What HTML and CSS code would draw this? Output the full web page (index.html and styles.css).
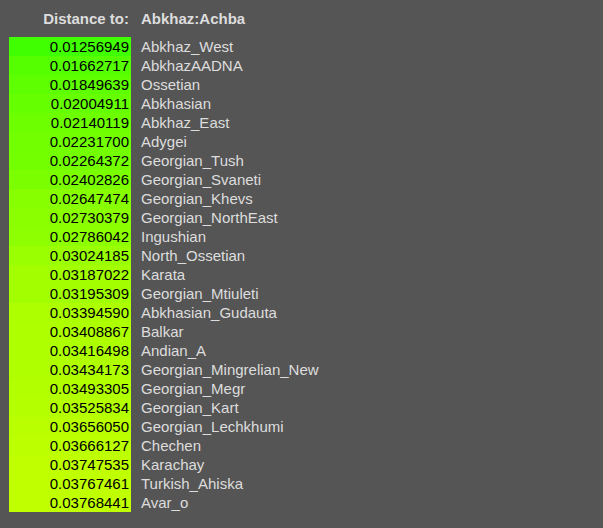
FILE: index.html
```html
<!DOCTYPE html>
<html>
<head>
<meta charset="utf-8">
<link rel="stylesheet" href="styles.css">
</head>
<body>
<div class="wrap">
  <div class="head">
    <div class="head-label">Distance to:</div>
    <div class="head-target">Abkhaz:Achba</div>
  </div>
  <table class="dist">
    <tbody>
      <tr><td class="val" style="background:rgb(64,255,0)">0.01256949</td><td class="name">Abkhaz_West</td></tr>
      <tr><td class="val" style="background:rgb(85,255,0)">0.01662717</td><td class="name">AbkhazAADNA</td></tr>
      <tr><td class="val" style="background:rgb(94,255,0)">0.01849639</td><td class="name">Ossetian</td></tr>
      <tr><td class="val" style="background:rgb(102,255,0)">0.02004911</td><td class="name">Abkhasian</td></tr>
      <tr><td class="val" style="background:rgb(109,255,0)">0.02140119</td><td class="name">Abkhaz_East</td></tr>
      <tr><td class="val" style="background:rgb(114,255,0)">0.02231700</td><td class="name">Adygei</td></tr>
      <tr><td class="val" style="background:rgb(115,255,0)">0.02264372</td><td class="name">Georgian_Tush</td></tr>
      <tr><td class="val" style="background:rgb(123,255,0)">0.02402826</td><td class="name">Georgian_Svaneti</td></tr>
      <tr><td class="val" style="background:rgb(135,255,0)">0.02647474</td><td class="name">Georgian_Khevs</td></tr>
      <tr><td class="val" style="background:rgb(139,255,0)">0.02730379</td><td class="name">Georgian_NorthEast</td></tr>
      <tr><td class="val" style="background:rgb(142,255,0)">0.02786042</td><td class="name">Ingushian</td></tr>
      <tr><td class="val" style="background:rgb(154,255,0)">0.03024185</td><td class="name">North_Ossetian</td></tr>
      <tr><td class="val" style="background:rgb(163,255,0)">0.03187022</td><td class="name">Karata</td></tr>
      <tr><td class="val" style="background:rgb(163,255,0)">0.03195309</td><td class="name">Georgian_Mtiuleti</td></tr>
      <tr><td class="val" style="background:rgb(173,255,0)">0.03394590</td><td class="name">Abkhasian_Gudauta</td></tr>
      <tr><td class="val" style="background:rgb(174,255,0)">0.03408867</td><td class="name">Balkar</td></tr>
      <tr><td class="val" style="background:rgb(174,255,0)">0.03416498</td><td class="name">Andian_A</td></tr>
      <tr><td class="val" style="background:rgb(175,255,0)">0.03434173</td><td class="name">Georgian_Mingrelian_New</td></tr>
      <tr><td class="val" style="background:rgb(178,255,0)">0.03493305</td><td class="name">Georgian_Megr</td></tr>
      <tr><td class="val" style="background:rgb(180,255,0)">0.03525834</td><td class="name">Georgian_Kart</td></tr>
      <tr><td class="val" style="background:rgb(186,255,0)">0.03656050</td><td class="name">Georgian_Lechkhumi</td></tr>
      <tr><td class="val" style="background:rgb(187,255,0)">0.03666127</td><td class="name">Chechen</td></tr>
      <tr><td class="val" style="background:rgb(191,255,0)">0.03747535</td><td class="name">Karachay</td></tr>
      <tr><td class="val" style="background:rgb(192,255,0)">0.03767461</td><td class="name">Turkish_Ahiska</td></tr>
      <tr><td class="val" style="background:rgb(192,255,0)">0.03768441</td><td class="name">Avar_o</td></tr>
    </tbody>
  </table>
</div>
</body>
</html>
```
FILE: styles.css
```css
html, body {
  margin: 0;
  padding: 0;
  background: #555555;
}
body {
  font-family: "Liberation Sans", Arial, sans-serif;
  font-size: 15px;
  color: #dddddd;
}
.wrap {
  padding: 9px 9px 0 9px;
}
.head {
  display: grid;
  grid-template-columns: 122px auto;
  line-height: 19px;
  font-weight: bold;
  margin-bottom: 9px;
}
.head-label {
  text-align: right;
  padding-right: 2px;
}
.head-target {
  padding-left: 10px;
}
.dist {
  border-collapse: collapse;
  border-spacing: 0;
}
.dist td {
  height: 19px;
  padding: 0;
  line-height: 19px;
  white-space: nowrap;
}
.dist .val {
  width: 120px;
  text-align: right;
  padding-right: 2px;
  color: #000000;
}
.dist .name {
  padding-left: 10px;
}
```
